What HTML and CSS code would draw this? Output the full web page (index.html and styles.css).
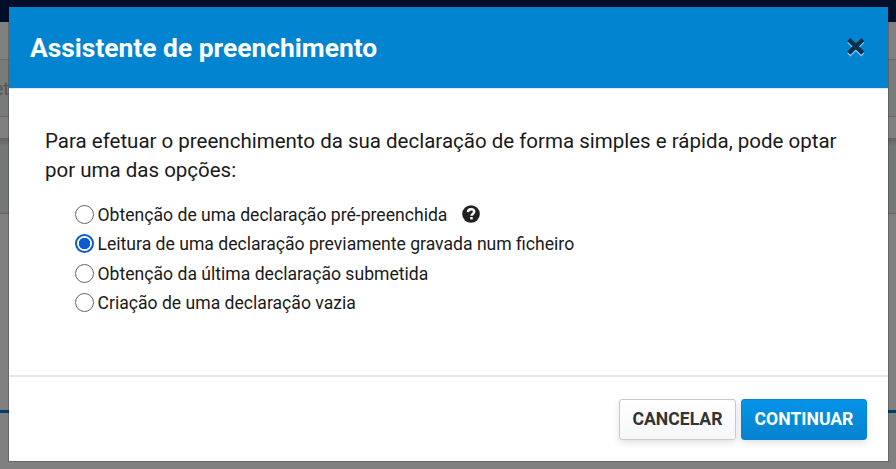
FILE: index.html
```
<!DOCTYPE html>
<html lang="pt">

<head>
    <meta charset="UTF-8">
    <meta name="viewport" content="width=device-width, initial-scale=1.0">
    <title>Assistente de preenchimento</title>
    <link rel="stylesheet" href="styles.css">
</head>

<body>
    <div class="page">
        <div class="page-top"></div>
        <div class="page-bar"></div>
        <div class="page-field">et</div>
        <div class="page-tabs"></div>
        <div class="page-panel"></div>
        <div class="page-content"></div>
        <div class="page-footer"></div>
    </div>

    <div class="modal">
        <div class="modal-header">
            <h1 class="modal-title">Assistente de preenchimento</h1>
            <button class="close" aria-label="Fechar">
                <svg width="20" height="20" viewBox="0 0 20 20">
                    <path class="close-light" d="M2.8 4.2l14 13.6M16.8 4.2l-14 13.6" />
                    <path class="close-dark" d="M2.8 2.6l14 13.6M16.8 2.6l-14 13.6" />
                </svg>
            </button>
        </div>

        <div class="modal-body">
            <p class="intro">Para efetuar o preenchimento da sua declaração de forma simples e rápida, pode optar<br>por uma das opções:</p>
            <div class="options">
                <label class="option">
                    <input type="radio" name="opcao">
                    <span class="option-text">Obtenção de uma declaração pré-preenchida</span>
                    <svg class="help" width="18" height="18" viewBox="0 0 18 18">
                        <circle cx="9" cy="9" r="8.8" fill="#222" />
                        <path d="M5.9 7.1C6 5.1 7.3 4.2 9.1 4.2c1.8 0 3.1 1 3.1 2.6 0 2.1-2.7 2.1-2.7 4" fill="none" stroke="#fff" stroke-width="2.4" />
                        <path d="M8.2 12h2.5v2.4H8.2z" fill="#fff" />
                    </svg>
                </label>
                <label class="option">
                    <input type="radio" name="opcao" checked>
                    <span class="option-text">Leitura de uma declaração previamente gravada num ficheiro</span>
                </label>
                <label class="option">
                    <input type="radio" name="opcao">
                    <span class="option-text">Obtenção da última declaração submetida</span>
                </label>
                <label class="option">
                    <input type="radio" name="opcao">
                    <span class="option-text">Criação de uma declaração vazia</span>
                </label>
            </div>
        </div>

        <div class="modal-footer">
            <button class="btn btn-default">CANCELAR</button>
            <button class="btn btn-primary">CONTINUAR</button>
        </div>
    </div>
</body>

</html>
```
FILE: styles.css
```
* {
    box-sizing: border-box;
}

body {
    margin: 0;
    height: 469px;
    overflow: hidden;
    font-family: Roboto, "Liberation Sans", sans-serif;
    color: #1a1a1a;
}

/* page behind the dialog */
.page {
    display: flex;
    flex-direction: column;
    height: 469px;
    background: #808080;
}

.page-top {
    height: 22px;
    background: #000f29;
}

.page-bar {
    height: 38px;
    border-bottom: 1px solid #6a6a6a;
}

.page-field {
    height: 57px;
    padding-top: 19px;
    margin-left: -6px;
    border-bottom: 1px solid #686868;
    background: #787b7a;
    color: #555;
    font-size: 17.6px;
    line-height: 20px;
}

.page-tabs {
    height: 21px;
}

.page-panel {
    height: 76px;
    border-bottom: 1px solid #646665;
    background: linear-gradient(#606161, #747776 8px);
}

.page-content {
    height: 196px;
}

.page-footer {
    height: 59px;
    border-top: 3px solid #003d6b;
}

/* dialog */
.modal {
    position: absolute;
    top: 7px;
    left: 9px;
    width: 879px;
    height: 454px;
    display: flex;
    flex-direction: column;
    background: #fff;
    box-shadow: 0 0 0 1px rgba(0, 0, 0, 0.2);
}

.modal-header {
    display: flex;
    align-items: center;
    justify-content: space-between;
    height: 81px;
    padding: 1px 22px 0 21px;
    background: #0384d0;
    box-shadow: 0 1px 0 #e5e5e5;
}

.modal-title {
    margin: 0;
    color: #fff;
    font-size: 26.4px;
    font-weight: 700;
    line-height: 30px;
}

.close {
    display: flex;
    margin-top: -3px;
    padding: 0;
    border: none;
    background: none;
}

.close path {
    fill: none;
    stroke-width: 4.4;
}

.close .close-light {
    stroke: #91c5ff;
}

.close .close-dark {
    stroke: #0b304b;
}

.modal-body {
    flex: 1;
    padding: 39px 36px 0;
}

.intro {
    margin: 0;
    font-size: 20.5px;
    line-height: 29px;
    white-space: nowrap;
}

.options {
    padding: 15.5px 0 0 30px;
}

.option {
    display: flex;
    align-items: center;
    height: 29.3px;
    font-size: 17.6px;
    white-space: nowrap;
}

.option input {
    appearance: none;
    flex: none;
    width: 19px;
    height: 19px;
    margin: -1px 3.5px 0 0;
    border: 1.5px solid #666;
    border-radius: 50%;
    background: #fff;
}

.option input:checked {
    border: 2px solid #0b5bd0;
    background: radial-gradient(circle, #0b5bd0 5.5px, #fff 6px);
}

.help {
    margin: -3px 0 0 15px;
}

.modal-footer {
    display: flex;
    justify-content: flex-end;
    gap: 5px;
    height: 86px;
    padding: 22px 21px 0 0;
    border-top: 2px solid #e5e5e5;
}

.btn {
    height: 41px;
    padding: 0 0 1px;
    border-radius: 3px;
    font-family: inherit;
    font-size: 17.6px;
    font-weight: 700;
    box-shadow: 0 3px 7px rgba(0, 0, 0, 0.12);
}

.btn-default {
    width: 117px;
    border: 1px solid #c9cacc;
    background: linear-gradient(#fff, #f5f6f8);
    color: #333;
}

.btn-primary {
    width: 126px;
    border: 1px solid #0a83ce;
    background: linear-gradient(#0493e8, #0783ce);
    color: #fff;
}
```
